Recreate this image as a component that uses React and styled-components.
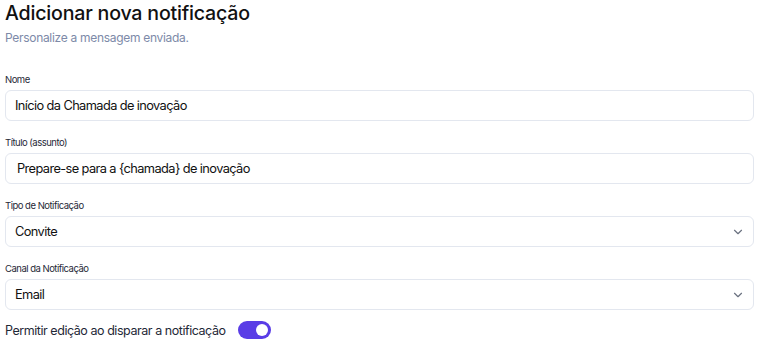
import React, { useState } from "react";
import styled, { createGlobalStyle } from "styled-components";
import { ChevronDown } from "lucide-react";

const GlobalStyle = createGlobalStyle`
  body {
    margin: 0;
    background: #ffffff;
    font-family: Inter, "Noto Sans", sans-serif;
    color: #111827;
  }
`;

const Page = styled.div`
  padding: 1px 6px 0 5px;
`;

const Title = styled.h1`
  margin: 0;
  font-size: 19.6px;
  line-height: 24px;
  font-weight: 500;
  letter-spacing: -0.2px;
  color: #111;
`;

const Subtitle = styled.p`
  margin: 3px 0 0;
  font-size: 12px;
  line-height: 20px;
  letter-spacing: -0.3px;
  color: #7d8aa8;
`;

const Form = styled.div`
  margin-top: 26px;
  display: flex;
  flex-direction: column;
  gap: 16px;
`;

const Field = styled.div`
  display: flex;
  flex-direction: column;
  gap: 4px;
`;

const Label = styled.label`
  font-size: 9.5px;
  line-height: 12px;
  letter-spacing: -0.5px;
  color: #1f2937;
`;

const Box = styled.div`
  height: 31px;
  box-sizing: border-box;
  border: 1px solid #e3e7ef;
  border-radius: 6px;
  display: flex;
  align-items: center;
  justify-content: space-between;
  padding: 0 8px 0 ${(p) => p.$pad || 9}px;
  font-size: 12.8px;
  letter-spacing: -0.6px;
  color: #111;
`;

const Chevron = styled(ChevronDown)`
  color: #6b7280;
`;

const ToggleRow = styled.div`
  margin-top: -5px;
  display: flex;
  align-items: center;
  gap: 12px;
  font-size: 12.5px;
  letter-spacing: -0.45px;
  color: #1f2937;
`;

const Switch = styled.button`
  width: 33px;
  height: 18px;
  border-radius: 9px;
  border: none;
  padding: 0 3px;
  background: ${(p) => (p.$on ? "#5a3de6" : "#d1d5db")};
  display: flex;
  align-items: center;
  justify-content: ${(p) => (p.$on ? "flex-end" : "flex-start")};
  cursor: pointer;
`;

const Knob = styled.span`
  width: 12px;
  height: 12px;
  border-radius: 50%;
  background: #fff;
`;

export default function App() {
  const [on, setOn] = useState(true);
  return (
    <>
      <GlobalStyle />
      <Page>
        <Title>Adicionar nova notificação</Title>
        <Subtitle>Personalize a mensagem enviada.</Subtitle>
        <Form>
          <Field>
            <Label>Nome</Label>
            <Box>Início da Chamada de inovação</Box>
          </Field>
          <Field>
            <Label>Título (assunto)</Label>
            <Box $pad={11}>Prepare-se para a {"{chamada}"} de inovação</Box>
          </Field>
          <Field>
            <Label>Tipo de Notificação</Label>
            <Box>
              Convite
              <Chevron size={14} />
            </Box>
          </Field>
          <Field>
            <Label>Canal da Notificação</Label>
            <Box>
              Email
              <Chevron size={14} />
            </Box>
          </Field>
          <ToggleRow>
            Permitir edição ao disparar a notificação
            <Switch $on={on} onClick={() => setOn(!on)}>
              <Knob />
            </Switch>
          </ToggleRow>
        </Form>
      </Page>
    </>
  );
}
